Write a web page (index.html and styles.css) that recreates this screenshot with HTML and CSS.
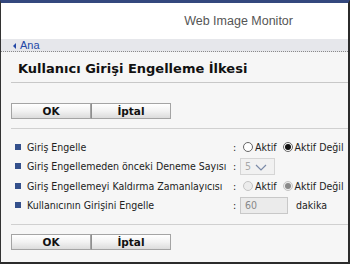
FILE: index.html
```html
<!DOCTYPE html>
<html lang="tr">
<head>
    <meta charset="UTF-8">
    <meta name="viewport" content="width=device-width, initial-scale=1.0">
    <title>Web Image Monitor - Kullanıcı Girişi Engelleme İlkesi</title>
    <link rel="stylesheet" href="styles.css">
</head>
<body>

<div class="window">
    <header class="topbar">
        <span class="brand">Web Image Monitor</span>
    </header>

    <nav class="crumb">
        <a href="#"><span class="arrow"></span>Ana</a>
    </nav>

    <main class="content">
        <h1 class="page-title">Kullanıcı Girişi Engelleme İlkesi</h1>

        <div class="actions">
            <button class="btn">OK</button>
            <button class="btn">İptal</button>
        </div>

        <div class="settings">
            <div class="label"><span class="bullet"></span>Giriş Engelle</div>
            <div class="colon">:</div>
            <div class="value">
                <label><input type="radio" name="engel"> Aktif</label>
                <label><input type="radio" name="engel" checked> Aktif Değil</label>
            </div>

            <div class="label"><span class="bullet"></span>Giriş Engellemeden önceki Deneme Sayısı</div>
            <div class="colon">:</div>
            <div class="value">
                <span class="select">
                    <select disabled>
                        <option>5</option>
                    </select>
                    <svg class="chevron" width="12" height="7" viewBox="0 0 12 7">
                        <path d="M1 1 L6 6 L11 1" fill="none" stroke="#7a8aa8" stroke-width="1.2"/>
                    </svg>
                </span>
            </div>

            <div class="label"><span class="bullet"></span>Giriş Engellemeyi Kaldırma Zamanlayıcısı</div>
            <div class="colon">:</div>
            <div class="value">
                <label><input type="radio" name="zaman" disabled> Aktif</label>
                <label><input type="radio" name="zaman" checked disabled> Aktif Değil</label>
            </div>

            <div class="label"><span class="bullet"></span>Kullanıcının Girişini Engelle</div>
            <div class="colon">:</div>
            <div class="value">
                <input type="text" class="field" value="60" disabled>
                <span class="unit">dakika</span>
            </div>
        </div>

        <div class="actions">
            <button class="btn">OK</button>
            <button class="btn">İptal</button>
        </div>
    </main>
</div>

</body>
</html>
```

FILE: styles.css
```css
body {
    margin: 0;
    font-family: "DejaVu Sans Condensed", "DejaVu Sans", sans-serif;
    font-size: 10.5px;
    color: #222;
}
.window {
    height: 264px;
    box-sizing: border-box;
    border-top: 3px solid #34487e;
    border-left: 1px solid #333;
    border-right: 2px solid #2b2b2b;
    border-bottom: 2px solid #2b2b2b;
    background: #f6f6f6;
    overflow: hidden;
    display: flex;
    flex-direction: column;
}
.topbar {
    height: 36px;
    background: #fff;
    display: flex;
    align-items: center;
    justify-content: flex-end;
    padding-right: 55px;
}
.brand {
    font-family: "Liberation Sans", Arial, sans-serif;
    font-size: 12.5px;
    color: #555;
}
.crumb {
    height: 12px;
    background: #e6e7eb;
    border-bottom: 1px dotted #8a8a8a;
    display: flex;
    align-items: center;
    padding-left: 12px;
}
.crumb a {
    font-family: "Liberation Sans", Arial, sans-serif;
    font-size: 11px;
    color: #2448a6;
    text-decoration: none;
    display: flex;
    align-items: center;
}
.arrow {
    width: 0;
    height: 0;
    border-top: 3px solid transparent;
    border-bottom: 3px solid transparent;
    border-right: 3px solid #2448a6;
    margin-right: 4px;
    margin-top: 2px;
}
.content {
    padding-left: 10px;
}
.page-title {
    margin: 0;
    padding: 9px 0 5px 7px;
    font-family: "DejaVu Sans", sans-serif;
    font-size: 13px;
    line-height: 16px;
    font-weight: bold;
    color: #111;
    border-bottom: 1px solid #c8c8c8;
}
.actions {
    display: flex;
    padding: 20px 0 9px;
    border-bottom: 1px solid #d0d0d0;
}
.actions:last-child {
    padding-top: 9px;
    border-bottom: none;
}
.btn {
    width: 80px;
    height: 16px;
    padding: 0;
    margin: 0;
    font-family: "DejaVu Sans", sans-serif;
    font-size: 10.5px;
    font-weight: bold;
    color: #111;
    border: 1px solid #a4a4a4;
    background: linear-gradient(#ffffff, #f2f2f2 50%, #dcdcdc);
    border-radius: 0;
}
.btn + .btn {
    border-left: 1px solid #8f8f8f;
}
.settings {
    display: grid;
    grid-template-columns: 219px 9px 1fr;
    grid-auto-rows: 19.5px;
    align-items: center;
    padding: 8px 0 9px;
    border-bottom: 1px solid #d0d0d0;
    white-space: nowrap;
}
.label {
    display: flex;
    align-items: center;
    padding-left: 4px;
}
.bullet {
    width: 6px;
    height: 6px;
    background: #34508c;
    margin-right: 6px;
}
.colon {
    text-align: center;
}
.value {
    display: flex;
    align-items: center;
    padding-left: 1px;
}
.value label {
    display: flex;
    align-items: center;
    margin-right: 3px;
}
input[type="radio"] {
    appearance: none;
    width: 10px;
    height: 10px;
    margin: 0 2px 0 3px;
    border: 1px solid #666;
    border-radius: 50%;
    background: #fff;
    display: grid;
    place-items: center;
}
input[type="radio"]:checked::after {
    content: "";
    width: 6px;
    height: 6px;
    border-radius: 50%;
    background: #111;
}
input[type="radio"]:disabled {
    border-color: #c4c4c4;
    background: #ececec;
}
input[type="radio"]:disabled:checked::after {
    background: #8a8a8a;
}
.select {
    position: relative;
    display: inline-block;
}
.select select {
    appearance: none;
    width: 35px;
    height: 17px;
    margin: 0;
    padding: 0 0 0 4px;
    font-family: "DejaVu Sans Condensed", "DejaVu Sans", sans-serif;
    font-size: 10.5px;
    color: #888;
    border: 1px solid #c8c8c8;
    background: #f0f0f0;
    border-radius: 0;
}
.chevron {
    position: absolute;
    right: 8px;
    top: 6px;
}
.field {
    width: 48px;
    height: 17px;
    box-sizing: border-box;
    margin: 0;
    padding: 0 0 0 4px;
    font-family: "DejaVu Sans Condensed", "DejaVu Sans", sans-serif;
    font-size: 10.5px;
    color: #888;
    border: 1px solid #c8c8c8;
    background: #ebebeb;
}
.unit {
    margin-left: 8px;
}
```
